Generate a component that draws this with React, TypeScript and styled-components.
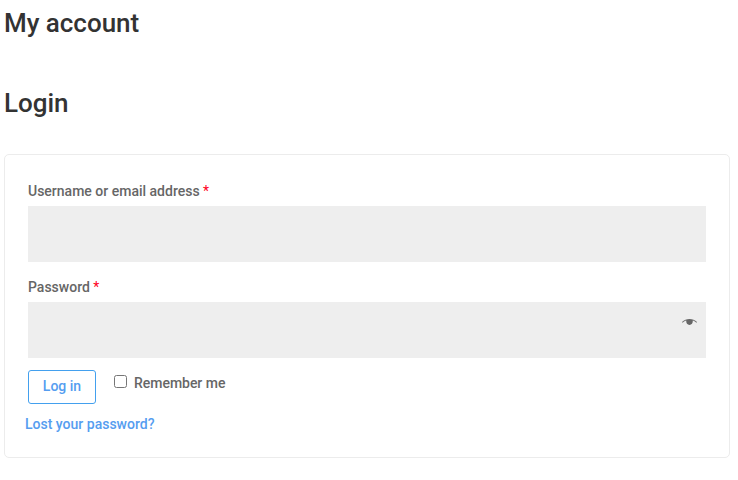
import React from "react";
import styled, { createGlobalStyle } from "styled-components";

const GlobalStyle = createGlobalStyle`
  *, *::before, *::after { box-sizing: border-box; }
  body {
    margin: 0;
    background: #fff;
    color: #666;
    font: 500 14px/24px Roboto, sans-serif;
  }
`;

const Page = styled.main`
  padding: 7px 8px 22px 4px;
`;

const Heading = styled.h1<{ $gap: number }>`
  margin: 0 0 ${(p) => p.$gap}px;
  color: #333;
  font-size: 26px;
  font-weight: 500;
  letter-spacing: -0.03px;
  line-height: 32px;
`;

const LoginForm = styled.form`
  height: 304px;
  padding: 24px 23px 0;
  border: 1px solid #ececec;
  border-radius: 5px;
`;

const Field = styled.div<{ $gap: number }>`
  margin-bottom: ${(p) => p.$gap}px;
`;

const Label = styled.label`
  display: block;
  height: 27px;
`;

const Required = styled.span`
  color: #ff0022;
  font-weight: 400;
`;

const InputWrap = styled.div`
  position: relative;
`;

const Input = styled.input`
  display: block;
  width: 100%;
  height: 56px;
  padding: 15px;
  border: 0;
  background: #eee;
  font: inherit;
`;

const RevealButton = styled.button`
  position: absolute;
  top: 14px;
  right: 9px;
  display: flex;
  padding: 0;
  border: 0;
  background: none;
`;

const Actions = styled.div`
  display: flex;
  align-items: flex-start;
`;

const SubmitButton = styled.button`
  width: 68px;
  height: 34px;
  padding: 0 0 2px;
  border: 1px solid #43a0ee;
  border-radius: 3px;
  background: #fff;
  color: #559df0;
  font: inherit;
`;

const Remember = styled.label`
  display: flex;
  margin-left: 18px;
  padding-top: 1px;
  letter-spacing: -0.03px;
`;

const Checkbox = styled.input`
  width: 13px;
  height: 13px;
  margin: 4px 7px 0 0;
`;

const LostLink = styled.a`
  display: block;
  margin: 8px 0 0 -3px;
  color: #559df0;
  text-decoration: none;
`;

const EyeIcon = () => (
  <svg width="15" height="12" viewBox="0 0 15 12">
    <path d="M0 6C4 2 11 2 15 6L14.3 6.7C12.9 5.5 12 5 10.8 4.6C11 7.3 9.6 9 7.5 9S4 7.3 4.2 4.6C3 5 2.1 5.5.7 6.7Z" fill="#666" />
  </svg>
);

export default function App() {
  return (
    <>
      <GlobalStyle />
      <Page>
        <Heading $gap={48}>My account</Heading>
        <Heading as="h2" $gap={35}>Login</Heading>
        <LoginForm>
          <Field $gap={13}>
            <Label htmlFor="username">Username or email address <Required>*</Required></Label>
            <Input id="username" />
          </Field>
          <Field $gap={12}>
            <Label htmlFor="password">Password <Required>*</Required></Label>
            <InputWrap>
              <Input id="password" type="password" />
              <RevealButton type="button" aria-label="Show password"><EyeIcon /></RevealButton>
            </InputWrap>
          </Field>
          <Actions>
            <SubmitButton type="submit">Log in</SubmitButton>
            <Remember><Checkbox type="checkbox" />Remember me</Remember>
          </Actions>
          <LostLink href="#">Lost your password?</LostLink>
        </LoginForm>
      </Page>
    </>
  );
}
